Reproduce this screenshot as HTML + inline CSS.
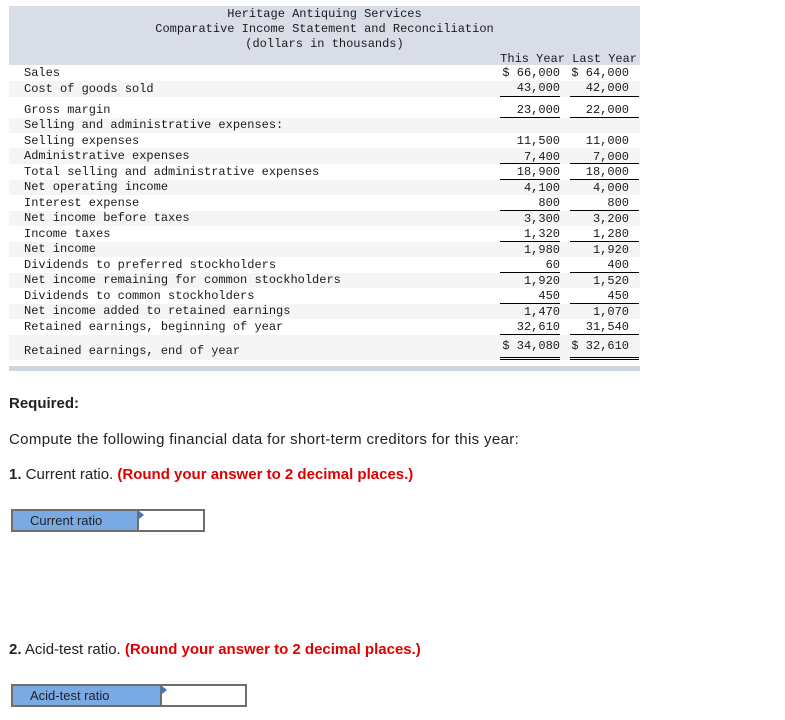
<!DOCTYPE html>
<html><head><meta charset="utf-8"><style>
body{margin:0;background:#fff;width:785px;height:720px;position:relative;overflow:hidden}
.m{font-family:"Liberation Mono",monospace;font-size:12px;color:#1a1a1a;position:absolute;white-space:pre;line-height:15px}
.bg{position:absolute;left:9px;width:631px}
.l{left:24px}
.c1{right:225px;text-align:right}
.c2{right:156px;text-align:right}
.u{position:absolute;height:1px;background:#000}
.s{font-family:"Liberation Sans",Arial,sans-serif;position:absolute;left:9px;font-size:15px;color:#222;white-space:nowrap}
.red{color:#e00000;font-weight:bold;letter-spacing:0}
.box{position:absolute;border:2px solid #6e6e6e;height:19px;background:#fff}
.lab{position:absolute;left:0;top:0;bottom:0;background:#7aaae4;border-right:2px solid #6e6e6e;font-family:"Liberation Sans",Arial,sans-serif;font-size:13px;color:#222;line-height:19px;padding-left:17px;box-sizing:border-box}
.tri{position:absolute;top:0;width:0;height:0;border-top:4px solid transparent;border-bottom:4px solid transparent;border-left:5px solid #3b78c9}
</style></head><body>
<div class="bg" style="top:6px;height:59px;background:#d9dde7"></div>
<div class="m" style="left:9px;width:631px;top:7px;text-align:center">Heritage Antiquing Services
Comparative Income Statement and Reconciliation
(dollars in thousands)</div>
<div class="m" style="right:148px;top:52px">This Year Last Year</div>
<div class="bg" style="top:81px;height:16px;background:#f5f5f5"></div>
<div class="bg" style="top:118px;height:15px;background:#f5f5f5"></div>
<div class="bg" style="top:148px;height:16px;background:#f5f5f5"></div>
<div class="bg" style="top:180px;height:15px;background:#f5f5f5"></div>
<div class="bg" style="top:211px;height:15px;background:#f5f5f5"></div>
<div class="bg" style="top:242px;height:15px;background:#f5f5f5"></div>
<div class="bg" style="top:273px;height:15px;background:#f5f5f5"></div>
<div class="bg" style="top:304px;height:15px;background:#f5f5f5"></div>
<div class="bg" style="top:335px;height:25px;background:#f5f5f5"></div>
<div class="bg" style="top:366px;height:5px;background:#d0d6e0"></div>

<div class="m l" style="top:66px">Sales</div>
<div class="m l" style="top:82px">Cost of goods sold</div>
<div class="m l" style="top:103px">Gross margin</div>
<div class="m l" style="top:118px">Selling and administrative expenses:</div>
<div class="m l" style="top:134px">Selling expenses</div>
<div class="m l" style="top:149px">Administrative expenses</div>
<div class="m l" style="top:165px">Total selling and administrative expenses</div>
<div class="m l" style="top:180px">Net operating income</div>
<div class="m l" style="top:196px">Interest expense</div>
<div class="m l" style="top:211px">Net income before taxes</div>
<div class="m l" style="top:227px">Income taxes</div>
<div class="m l" style="top:242px">Net income</div>
<div class="m l" style="top:258px">Dividends to preferred stockholders</div>
<div class="m l" style="top:273px">Net income remaining for common stockholders</div>
<div class="m l" style="top:289px">Dividends to common stockholders</div>
<div class="m l" style="top:304px">Net income added to retained earnings</div>
<div class="m l" style="top:320px">Retained earnings, beginning of year</div>
<div class="m l" style="top:344px">Retained earnings, end of year</div>

<div class="m c1" style="top:66px">$ 66,000
43,000</div>
<div class="m c2" style="top:66px">$ 64,000
42,000</div>
<div class="m c1" style="top:103px">23,000</div>
<div class="m c2" style="top:103px">22,000</div>
<div class="m c1" style="top:134px;line-height:15.5px">11,500
7,400
18,900
4,100
800
3,300
1,320
1,980
60
1,920
450
1,470
32,610</div>
<div class="m c2" style="top:134px;line-height:15.5px">11,000
7,000
18,000
4,000
800
3,200
1,280
1,920
400
1,520
450
1,070
31,540</div>
<div class="m c1" style="top:339px">$ 34,080</div>
<div class="m c2" style="top:339px">$ 32,610</div>

<div class="u" style="left:500px;width:60px;top:96px"></div><div class="u" style="left:570px;width:69px;top:96px"></div>
<div class="u" style="left:500px;width:60px;top:117px"></div><div class="u" style="left:570px;width:69px;top:117px"></div>
<div class="u" style="left:500px;width:60px;top:163px"></div><div class="u" style="left:570px;width:69px;top:163px"></div>
<div class="u" style="left:500px;width:60px;top:179px"></div><div class="u" style="left:570px;width:69px;top:179px"></div>
<div class="u" style="left:500px;width:60px;top:210px"></div><div class="u" style="left:570px;width:69px;top:210px"></div>
<div class="u" style="left:500px;width:60px;top:241px"></div><div class="u" style="left:570px;width:69px;top:241px"></div>
<div class="u" style="left:500px;width:60px;top:272px"></div><div class="u" style="left:570px;width:69px;top:272px"></div>
<div class="u" style="left:500px;width:60px;top:303px"></div><div class="u" style="left:570px;width:69px;top:303px"></div>
<div class="u" style="left:500px;width:60px;top:334px"></div><div class="u" style="left:570px;width:69px;top:334px"></div>
<div class="u" style="left:500px;width:60px;top:357px"></div><div class="u" style="left:570px;width:69px;top:357px"></div>
<div class="u" style="left:500px;width:60px;top:359px"></div><div class="u" style="left:570px;width:69px;top:359px"></div>

<div class="s" style="top:395px;font-weight:bold">Required:</div>
<div class="s" style="top:431px;letter-spacing:0.35px">Compute the following financial data for short-term creditors for this year:</div>
<div class="s" style="top:466px"><b>1.</b> Current ratio. <span class="red">(Round your answer to 2 decimal places.)</span></div>
<div class="box" style="left:11px;top:509px;width:190px"><div class="lab" style="width:126px">Current ratio</div><div class="tri" style="left:126px"></div></div>
<div class="s" style="top:641px"><b>2.</b> Acid-test ratio. <span class="red">(Round your answer to 2 decimal places.)</span></div>
<div class="box" style="left:11px;top:684px;width:232px"><div class="lab" style="width:149px">Acid-test ratio</div><div class="tri" style="left:149px"></div></div>
</body></html>
